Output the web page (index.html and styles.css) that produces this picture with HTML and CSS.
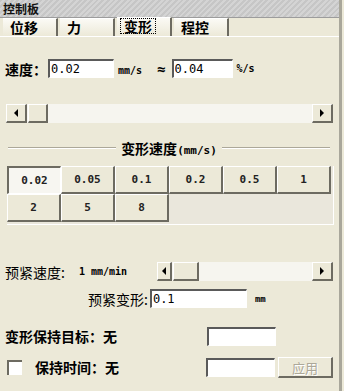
FILE: index.html
```html
<html>
<head>
    <link rel="stylesheet" href="styles.css">
</head>
<body>
    <div class="panel">
        <div class="title">控制板</div>
        <div class="tabs">
            <div class="tab">位移</div>
            <div class="tab">力</div>
            <div class="tab active"><span class="focus">变形</span></div>
            <div class="tab">程控</div>
        </div>
        <div class="page">
            <div class="speed-row">
                <span class="label">速度：</span>
                <input class="field w66" value="0.02">
                <span class="unit">mm/s <b class="approx">≈</b></span>
                <input class="field w60" value="0.04">
                <span class="unit">%/s</span>
            </div>

            <div class="scroll wide">
                <div class="sbtn"><span class="arr left"></span></div>
                <div class="thumb"></div>
                <div class="track"></div>
                <div class="sbtn"><span class="arr right"></span></div>
            </div>

            <div class="group-title">
                <span class="line"></span>
                <span class="gtext">变形速度<span class="mm">(mm/s)</span></span>
                <span class="line"></span>
            </div>

            <div class="grid">
                <button class="cell pressed">0.02</button>
                <button class="cell">0.05</button>
                <button class="cell">0.1</button>
                <button class="cell">0.2</button>
                <button class="cell">0.5</button>
                <button class="cell">1</button>
                <button class="cell">2</button>
                <button class="cell">5</button>
                <button class="cell">8</button>
            </div>

            <div class="preload-row">
                <span class="label">预紧速度:</span>
                <span class="mono">1 mm/min</span>
                <div class="scroll short">
                    <div class="sbtn small"><span class="arr left"></span></div>
                    <div class="thumb big"></div>
                    <div class="track"></div>
                    <div class="sbtn"><span class="arr right"></span></div>
                </div>
            </div>

            <div class="deform-row">
                <span class="label">预紧变形:</span>
                <input class="field w96" value="0.1">
                <span class="unit small">mm</span>
            </div>

            <div class="hold-row first">
                <span class="label">变形保持目标：无</span>
                <input class="field w68">
            </div>
            <div class="hold-row second">
                <span class="check"></span>
                <span class="label indent">保持时间：无</span>
                <input class="field w68">
                <button class="apply" disabled>应用</button>
            </div>
        </div>
    </div>
</body>
</html>
```

FILE: styles.css
```css
body {
    margin: 0;
    width: 344px;
    height: 391px;
    background-color: #ece9d8;
    font-family: "Noto Sans CJK SC", "DejaVu Sans", sans-serif;
    font-size: 14px;
    color: #000;
    overflow: hidden;
}
.panel {
    width: 339px;
    height: 391px;
    border-right: 3px solid #a9a79b;
    background-color: #ece9d8;
}
.title {
    height: 16px;
    padding-top: 1px;
    line-height: 16px;
    padding-left: 3px;
    font-size: 12px;
    font-weight: bold;
    color: #111;
    background: repeating-linear-gradient(135deg, #c6c6c6 0px, #c6c6c6 2px, #d4d4d4 2px, #d4d4d4 4px);
    border-bottom: 1px solid #9c9c9c;
}
.tabs {
    display: flex;
    height: 18px;
    padding-left: 3px;
    border-bottom: 1px solid #fff;
}
.tab {
    width: 55px;
    height: 18px;
    line-height: 17px;
    padding-left: 7px;
    font-weight: bold;
    background: linear-gradient(#fbfaf5, #ece9d8);
    border-top: 1px solid #fff;
    border-right: 2px solid #6d6b61;
    box-sizing: border-box;
    margin-right: 2px;
}
.tab.active {
    height: 19px;
    margin-top: -1px;
    line-height: 17px;
    padding-left: 3px;
}
.focus {
    border: 1px dotted #000;
    padding: 0 3px;
    line-height: 14px;
    display: inline-block;
}
.page {
    padding: 22px 6px 0 5px;
}
.speed-row {
    display: flex;
    align-items: center;
    height: 19px;
}
.label {
    font-weight: bold;
    white-space: nowrap;
}
.field {
    height: 19px;
    box-sizing: border-box;
    border-top: 2px solid #5a5a5a;
    border-left: 2px solid #5a5a5a;
    border-right: 1px solid #fff;
    border-bottom: 1px solid #fff;
    font-family: "DejaVu Sans Mono", monospace;
    font-size: 12px;
    padding: 0 1px;
    background: #fff;
    outline: none;
}
.w66 { width: 66px; margin-left: 1px; }
.w60 { width: 61px; margin-left: 3px; }
.w96 { width: 97px; margin-left: 2px; }
.w68 { width: 69px; }
.unit {
    font-family: "DejaVu Sans Mono", monospace;
    font-size: 10px;
    font-weight: bold;
    margin-left: 4px;
    white-space: nowrap;
}
.approx {
    font-size: 14px;
    margin: 0 3px 0 9px;
}
.unit.small { margin-left: 8px; font-size: 9px; }
.mono {
    font-family: "DejaVu Sans Mono", monospace;
    font-size: 10px;
    font-weight: bold;
    margin-left: 14px;
    white-space: nowrap;
}
.scroll {
    display: flex;
    height: 19px;
    background: #f6f5ef;
}
.scroll.wide {
    margin: 26px 0 0 1px;
    width: 327px;
}
.scroll.short {
    width: 176px;
    margin-left: auto;
}
.track { flex: 1; }
.sbtn, .thumb {
    width: 21px;
    height: 19px;
    box-sizing: border-box;
    background: #ece9d8;
    border-top: 1px solid #fff;
    border-left: 1px solid #fff;
    border-right: 2px solid #6d6b61;
    border-bottom: 2px solid #6d6b61;
    display: flex;
    align-items: center;
    justify-content: center;
}
.sbtn.small { width: 15px; }
.thumb { width: 20px; margin-left: 1px; }
.thumb.big { width: 26px; }
.arr {
    width: 0;
    height: 0;
    border-top: 4px solid transparent;
    border-bottom: 4px solid transparent;
}
.arr.left { border-right: 4px solid #000; }
.arr.right { border-left: 4px solid #000; }
.group-title {
    display: flex;
    align-items: center;
    margin: 18px 3px 0 3px;
    height: 14px;
}
.line {
    flex: 1;
    height: 0;
    border-top: 1px solid #aca899;
    border-bottom: 1px solid #fff;
}
.gtext {
    font-weight: bold;
    padding: 0 5px;
    white-space: nowrap;
}
.mm {
    font-family: "DejaVu Sans Mono", monospace;
    font-size: 11px;
}
.grid {
    display: grid;
    grid-template-columns: repeat(6, 54px);
    grid-auto-rows: 28px;
    margin: 11px 0 0 2px;
    width: 326px;
    height: 58px;
    border-right: 1px solid #fff;
    border-bottom: 1px solid #fff;
    background: #eae7dc;
}
.cell {
    background: #ece9d8;
    border-top: 1px solid #fff;
    border-left: 1px solid #fff;
    border-right: 2px solid #6d6b61;
    border-bottom: 2px solid #6d6b61;
    font-family: "DejaVu Sans Mono", monospace;
    font-size: 11px;
    font-weight: bold;
    color: #222;
    padding: 0;
}
.cell.pressed {
    background: #f7f6f1;
    border-top: 2px solid #6d6b61;
    border-left: 2px solid #6d6b61;
    border-right: 1px solid #fff;
    border-bottom: 1px solid #fff;
}
.preload-row {
    display: flex;
    align-items: center;
    margin-top: 37px;
    height: 19px;
}
.preload-row .label { font-weight: normal; }
.deform-row {
    display: flex;
    align-items: center;
    margin: 8px 0 0 83px;
    height: 19px;
}
.deform-row .label { font-weight: normal; }
.hold-row {
    display: flex;
    align-items: center;
    height: 20px;
}
.hold-row.first { margin-top: 18px; }
.hold-row.second { margin-top: 11px; }
.hold-row.first .field { margin-left: auto; margin-right: 57px; }
.hold-row.second .field { margin-left: auto; }
.check {
    width: 13px;
    height: 13px;
    margin: 0 0 0 2px;
    background: #fff;
    border-top: 2px solid #6d6b61;
    border-left: 2px solid #6d6b61;
}
.indent { margin-left: 13px; }
.apply {
    width: 55px;
    height: 21px;
    margin-left: 3px;
    background: #ece9d8;
    border-top: 1px solid #fff;
    border-left: 1px solid #fff;
    border-right: 2px solid #6d6b61;
    border-bottom: 2px solid #6d6b61;
    color: #aca899;
    text-shadow: 1px 1px 0 #fff;
    font-family: "Noto Sans CJK SC", sans-serif;
    font-size: 13px;
    padding: 0;
}
```
